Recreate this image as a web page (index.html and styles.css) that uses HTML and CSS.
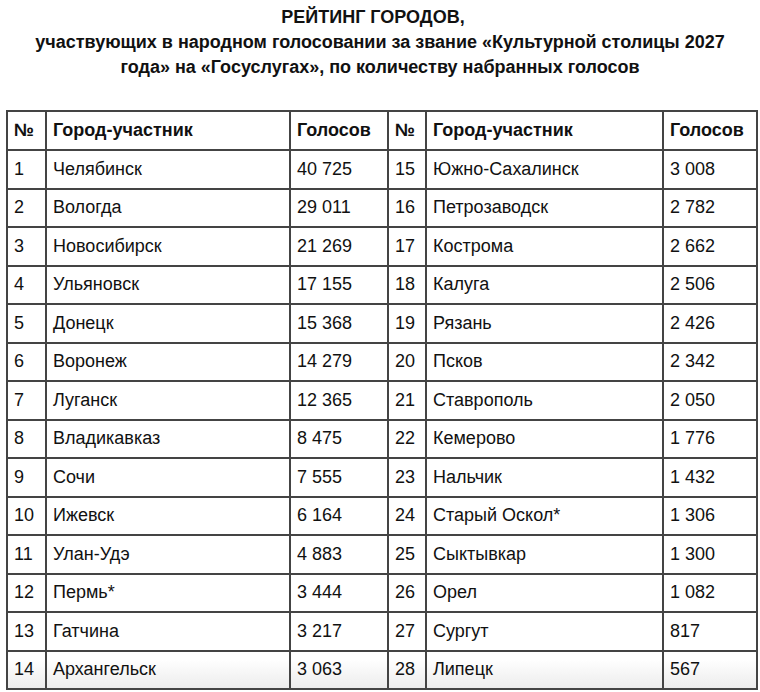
FILE: index.html
```html
<!DOCTYPE html>
<html lang="ru">
<head>
<meta charset="utf-8">
<link rel="stylesheet" href="styles.css">
</head>
<body>
<div class="page">
  <h1 class="title"><span class="title-main">РЕЙТИНГ ГОРОДОВ,</span>участвующих в народном голосовании за звание «Культурной столицы 2027 года» на «Госуслугах», по количеству набранных голосов</h1>
  <table class="rating">
    <colgroup>
      <col class="c-num"><col class="c-city"><col class="c-votes">
      <col class="c-num2"><col class="c-city2"><col class="c-votes2">
    </colgroup>
    <thead>
      <tr><th>№</th><th>Город-участник</th><th>Голосов</th><th>№</th><th>Город-участник</th><th>Голосов</th></tr>
    </thead>
    <tbody>
      <tr><td>1</td><td>Челябинск</td><td>40 725</td><td>15</td><td>Южно-Сахалинск</td><td>3 008</td></tr>
      <tr><td>2</td><td>Вологда</td><td>29 011</td><td>16</td><td>Петрозаводск</td><td>2 782</td></tr>
      <tr><td>3</td><td>Новосибирск</td><td>21 269</td><td>17</td><td>Кострома</td><td>2 662</td></tr>
      <tr><td>4</td><td>Ульяновск</td><td>17 155</td><td>18</td><td>Калуга</td><td>2 506</td></tr>
      <tr><td>5</td><td>Донецк</td><td>15 368</td><td>19</td><td>Рязань</td><td>2 426</td></tr>
      <tr><td>6</td><td>Воронеж</td><td>14 279</td><td>20</td><td>Псков</td><td>2 342</td></tr>
      <tr><td>7</td><td>Луганск</td><td>12 365</td><td>21</td><td>Ставрополь</td><td>2 050</td></tr>
      <tr><td>8</td><td>Владикавказ</td><td>8 475</td><td>22</td><td>Кемерово</td><td>1 776</td></tr>
      <tr><td>9</td><td>Сочи</td><td>7 555</td><td>23</td><td>Нальчик</td><td>1 432</td></tr>
      <tr><td>10</td><td>Ижевск</td><td>6 164</td><td>24</td><td>Старый Оскол*</td><td>1 306</td></tr>
      <tr><td>11</td><td>Улан-Удэ</td><td>4 883</td><td>25</td><td>Сыктывкар</td><td>1 300</td></tr>
      <tr><td>12</td><td>Пермь*</td><td>3 444</td><td>26</td><td>Орел</td><td>1 082</td></tr>
      <tr><td>13</td><td>Гатчина</td><td>3 217</td><td>27</td><td>Сургут</td><td>817</td></tr>
      <tr class="last"><td>14</td><td>Архангельск</td><td>3 063</td><td>28</td><td>Липецк</td><td>567</td></tr>
    </tbody>
  </table>
</div>
</body>
</html>
```
FILE: styles.css
```css
html, body {
  margin: 0;
  padding: 0;
  background: #fff;
}
body {
  font-family: "Liberation Sans", Arial, sans-serif;
  color: #111;
}
.page {
  width: 760px;
  padding: 5px 0 0 6px;
  box-sizing: border-box;
}
.title {
  margin: 0 6px 0 0;
  padding: 0 10px;
  font-size: 18px;
  font-weight: bold;
  line-height: 25px;
  text-align: center;
  height: 105px;
}
.title-main {
  display: block;
  padding-right: 14px;
}
.rating {
  border-collapse: collapse;
  width: 750px;
  table-layout: fixed;
  font-size: 18px;
}
.c-num { width: 39px; }
.c-city { width: 244px; }
.c-votes { width: 98px; }
.c-num2 { width: 38px; }
.c-city2 { width: 237px; }
.c-votes2 { width: 94px; }
.rating th, .rating td {
  border: 2px solid #444;
  padding: 0 0 0 6px;
  text-align: left;
  height: 38.5px;
  box-sizing: border-box;
  white-space: nowrap;
}
.rating th {
  font-weight: bold;
  height: 39px;
}
.rating tr.last td {
  background: linear-gradient(#fff 20%, #ececec);
}
```
